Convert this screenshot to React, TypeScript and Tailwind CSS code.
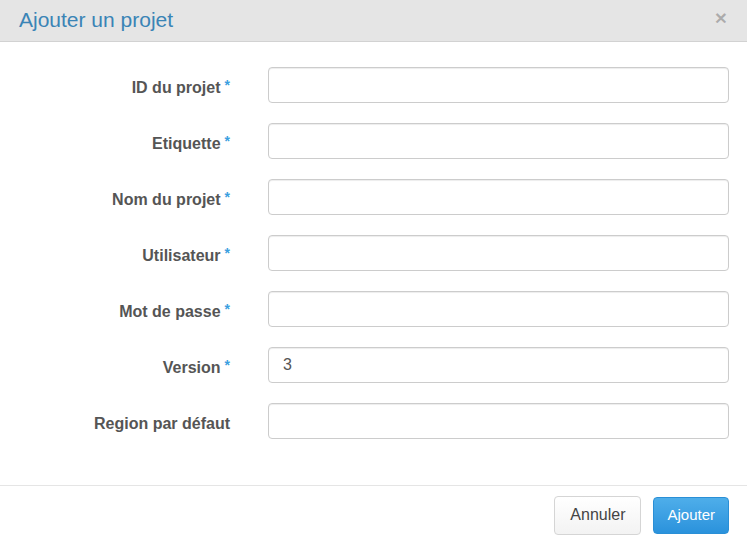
import React from 'react'

const fields = [
  { label: 'ID du projet', required: true, value: '' },
  { label: 'Etiquette', required: true, value: '' },
  { label: 'Nom du projet', required: true, value: '' },
  { label: 'Utilisateur', required: true, value: '' },
  { label: 'Mot de passe', required: true, value: '' },
  { label: 'Version', required: true, value: '3' },
  { label: 'Region par défaut', required: false, value: '' },
]

export default function App() {
  return (
    <div className="w-[747px] h-[546px] bg-white flex flex-col font-['Liberation_Sans',Arial,sans-serif] overflow-hidden">
      <div className="h-[42px] shrink-0 bg-[#e5e5e5] border-b border-[#d2d2d2] flex items-center justify-between pl-[19px] pr-[20px]">
        <h4 className="text-[21px] leading-none text-[#3a84b6] -mt-[2px]">Ajouter un projet</h4>
        <button className="text-[21px] font-bold leading-none text-black/25 -mt-[6px]">×</button>
      </div>

      <div className="flex-1 pt-[25px] pr-[18px]">
        <div className="grid grid-cols-[230px_1fr] gap-x-[38px] gap-y-[20px]">
          {fields.map((f) => (
            <React.Fragment key={f.label}>
              <label className="flex items-center justify-end pt-[5px] text-[16px] font-bold text-[#555]">
                {f.label}
                {f.required && <span className="text-[#3aa0e0] font-bold ml-[4px] text-[14px] -mt-[4px]">*</span>}
              </label>
              <input
                defaultValue={f.value}
                className="h-[36px] w-full rounded-[4px] border border-[#ccc] bg-white px-[14px] text-[16px] text-[#555] shadow-[inset_0_1px_1px_rgba(0,0,0,0.075)] outline-none"
              />
            </React.Fragment>
          ))}
        </div>
      </div>

      <div className="h-[61px] shrink-0 border-t border-[#e5e5e5] flex items-center justify-end gap-[12px] pr-[18px] pb-[2px]">
        <button className="h-[39px] px-[15px] rounded-[4px] border border-[#d5d5d5] bg-gradient-to-b from-white to-[#f3f3f3] text-[16px] text-[#444]">
          Annuler
        </button>
        <button className="h-[37px] px-[13px] rounded-[4px] border border-[#2a8fd6] bg-gradient-to-b from-[#4eaeea] to-[#2a92dc] text-[15px] text-white">
          Ajouter
        </button>
      </div>
    </div>
  )
}
